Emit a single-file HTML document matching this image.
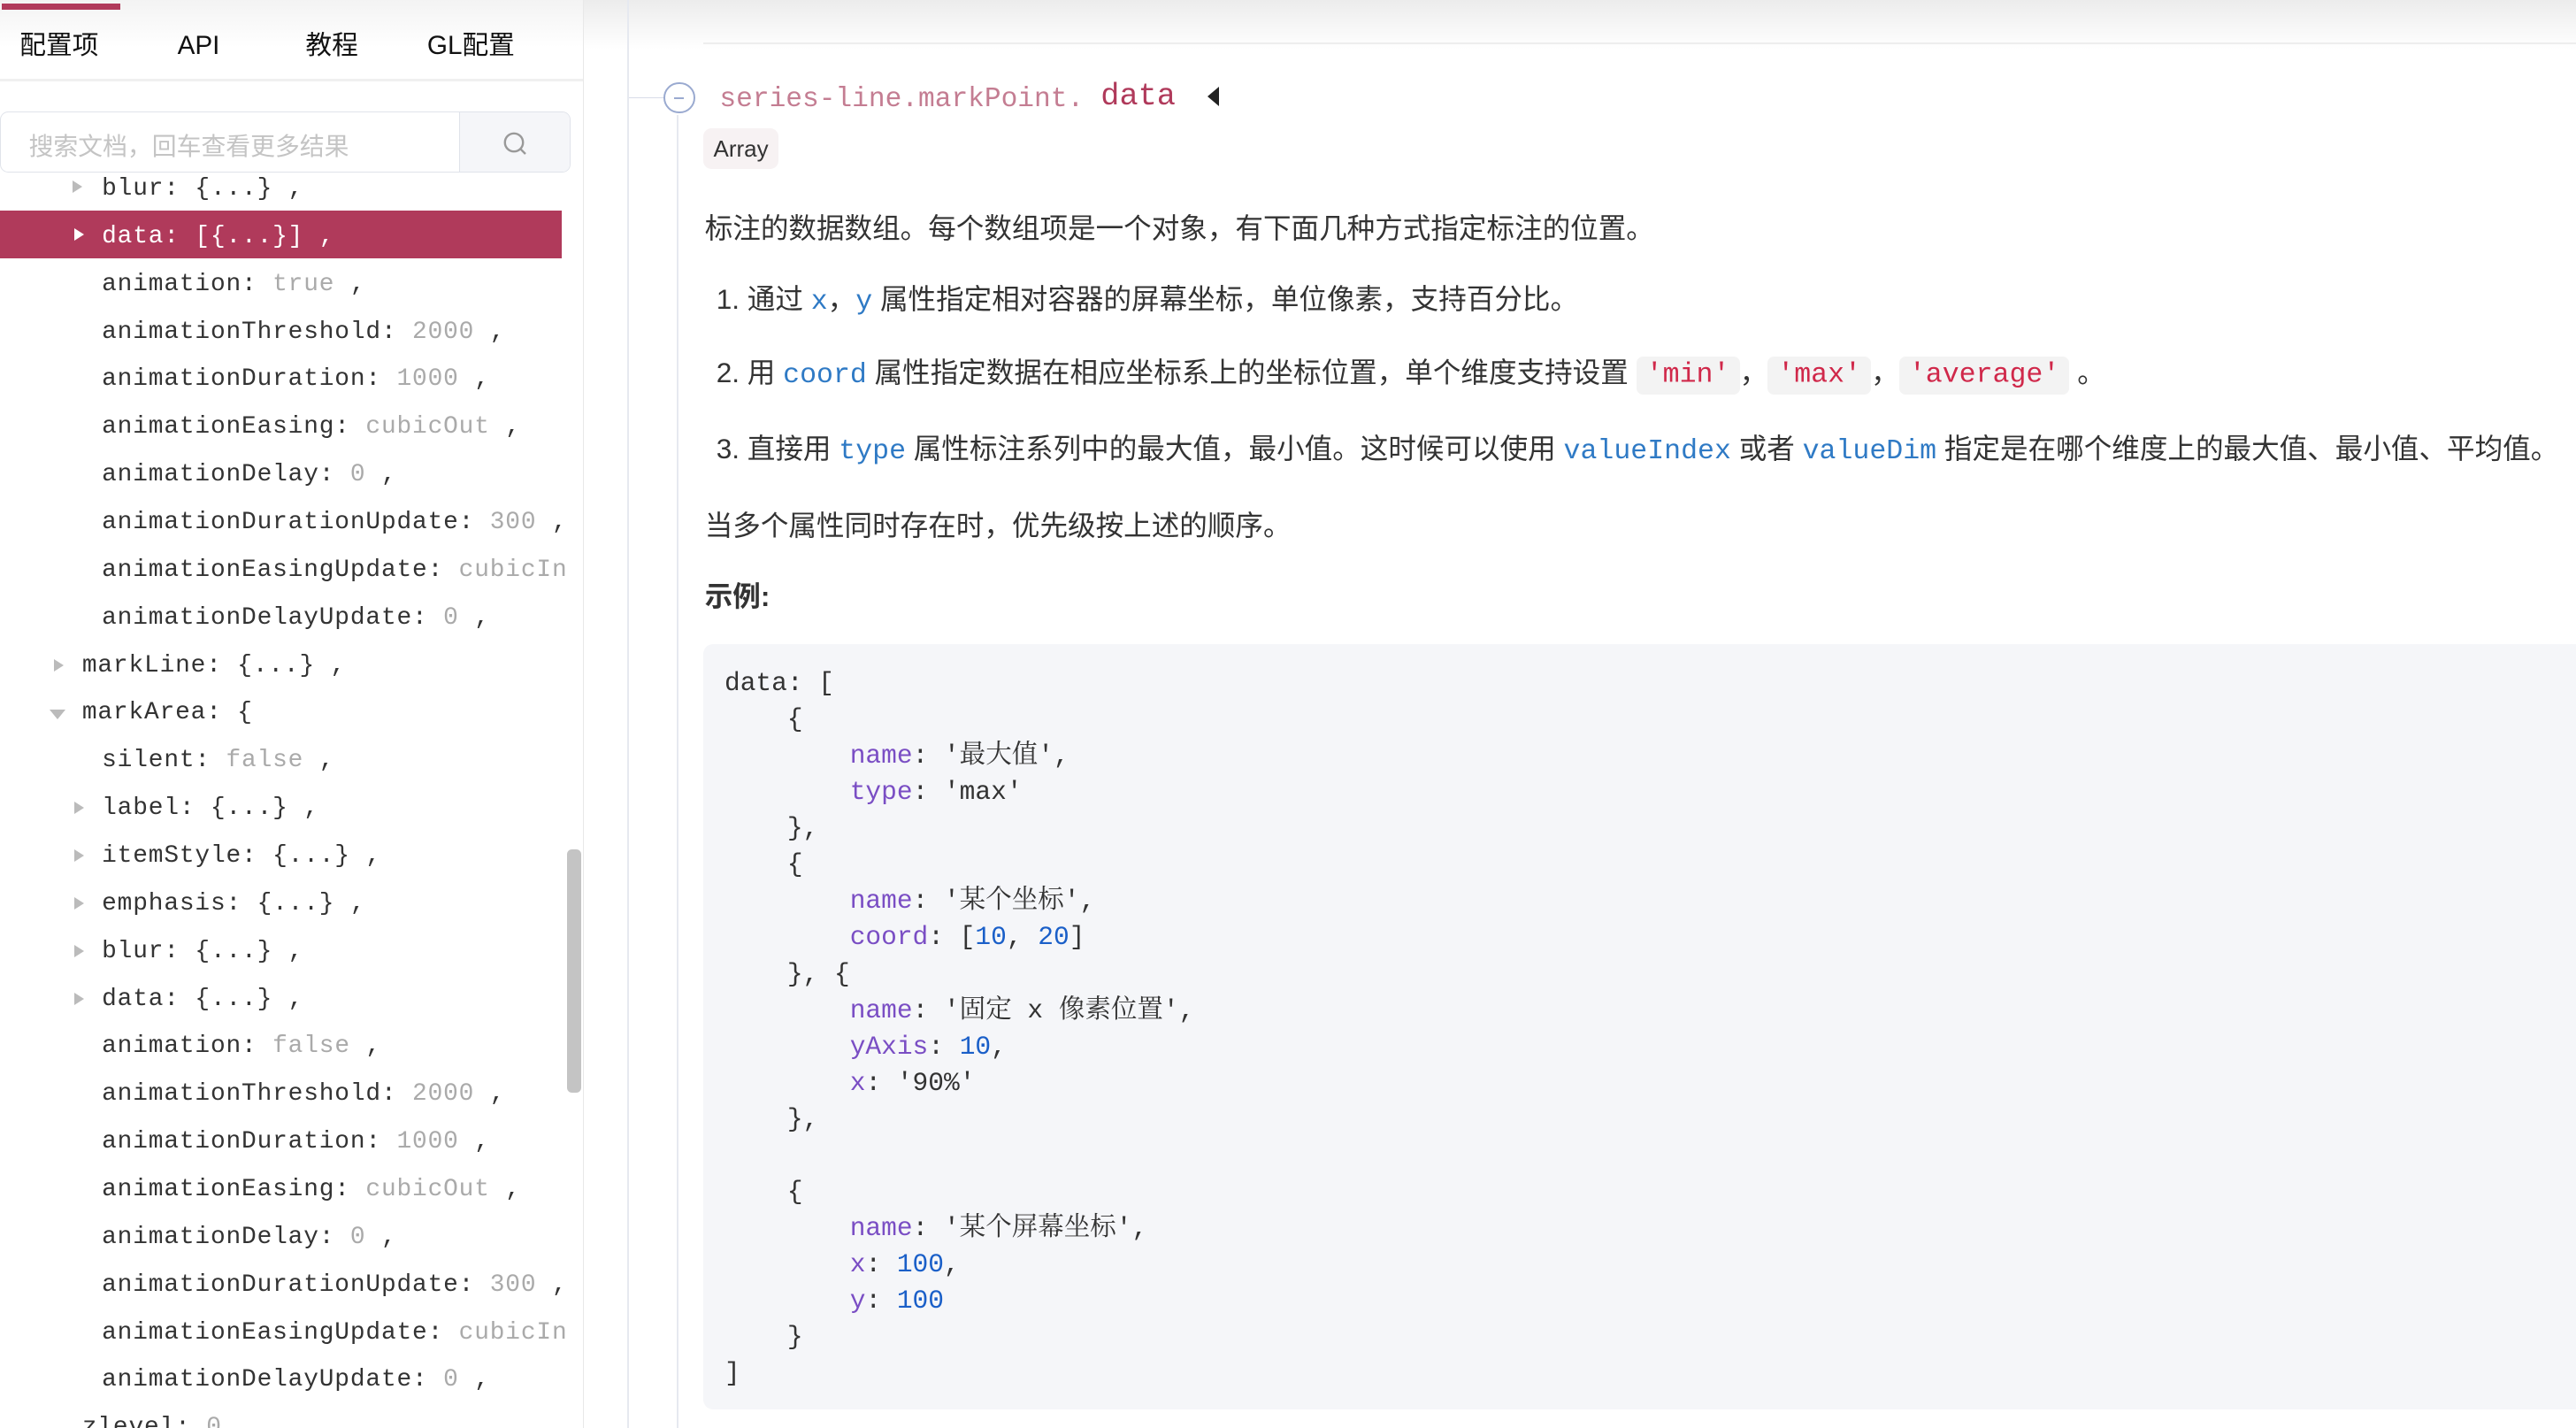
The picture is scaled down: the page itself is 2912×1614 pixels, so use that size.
<!DOCTYPE html>
<html><head><meta charset="utf-8"><style>
html,body{margin:0;padding:0;background:#fff;}
body{width:2912px;height:1613px;overflow:hidden;}
#w{zoom:1.857143;width:1568px;height:869px;position:relative;overflow:hidden;font-family:"Liberation Sans","Noto Sans CJK SC",sans-serif;color:#333;}
.abs{position:absolute;}
.mono{font-family:"Liberation Mono","Noto Sans CJK SC",monospace;}
#left{left:0;top:0;width:355px;height:869px;border-right:1px solid #e8e8e8;}
.tab{position:absolute;top:18px;font-size:16px;color:#111;line-height:20px;}
.tr{position:absolute;font-family:"Liberation Mono",monospace;font-size:15px;letter-spacing:0.45px;color:#333;white-space:pre;line-height:20px;}
.tr .v{color:#aaa;}
.ar{position:absolute;width:0;height:0;border-top:4px solid transparent;border-bottom:4px solid transparent;border-left:6px solid #bbb;}
.ad{position:absolute;width:0;height:0;border-left:5px solid transparent;border-right:5px solid transparent;border-top:6px solid #bbb;}
p.t{position:absolute;margin:0;font-size:17px;color:#333;white-space:nowrap;line-height:22px;}
.c{font-family:"Liberation Mono",monospace;color:#2f7ac5;font-size:17px;}
.q{font-family:"Liberation Mono",monospace;color:#d0284a;background:#f3f3f3;border-radius:4px;padding:2px 6px;font-size:17px;}
pre{margin:0;font-family:"Liberation Mono","Noto Serif CJK SC",monospace;font-size:15.9px;line-height:22.1px;color:#333;}
.k{color:#7a4ec4;}.n{color:#1a5fc8;}
</style></head><body><div id="w">
<div class="abs" style="left:0;top:0;width:1568px;height:30px;background:linear-gradient(#ececec,#fff);"></div>
<div id="left" class="abs">
 <div class="abs" style="left:0;top:0;width:355px;height:48px;background:linear-gradient(#f3f3f3,#fff 60%);border-bottom:2px solid #f0f0f0;"></div>
 <div class="abs" style="left:1px;top:2px;width:72px;height:4px;background:#b03a5b;"></div>
 <div class="tab" style="left:12px">配置项</div>
 <div class="tab" style="left:108px">API</div>
 <div class="tab" style="left:186px">教程</div>
 <div class="tab" style="left:260px">GL配置</div>
 <div class="abs" style="left:0;top:68px;width:346px;height:36px;border:1px solid #e0e3ea;border-radius:5px;overflow:hidden;">
  <div class="abs" style="left:17px;top:9px;font-size:15px;color:#c4c4c4;">搜索文档，回车查看更多结果</div>
  <div class="abs" style="left:279px;top:0;width:67px;height:36px;background:#f5f6f9;border-left:1px solid #e0e3ea;">
   <svg class="abs" style="left:26px;top:11px" width="16" height="16" viewBox="0 0 16 16"><circle cx="7" cy="7" r="5.5" fill="none" stroke="#999" stroke-width="1.3"/><path d="M11 11l3 3" stroke="#999" stroke-width="1.3"/></svg>
  </div>
 </div>
 <div class="abs" style="left:0;top:106px;width:355px;height:763px;overflow:hidden;">
  <div class="ar" style="left:44px;top:4px"></div><div class="tr" style="left:62px;top:-1px">blur: {...} ,</div>
  <div class="abs" style="left:0;top:22px;width:342px;height:29px;background:#b03a5b;"></div>
  <div class="ar" style="left:45px;top:33px;border-left-color:#fff"></div><div class="tr" style="left:62px;top:28px;color:#fff">data: [{...}] ,</div>
 </div>
 <div class="tr" style="left:62px;top:163px">animation: <span class="v">true</span> ,</div>
 <div class="tr" style="left:62px;top:192px">animationThreshold: <span class="v">2000</span> ,</div>
 <div class="tr" style="left:62px;top:221px">animationDuration: <span class="v">1000</span> ,</div>
 <div class="tr" style="left:62px;top:250px">animationEasing: <span class="v">cubicOut</span> ,</div>
 <div class="tr" style="left:62px;top:279px">animationDelay: <span class="v">0</span> ,</div>
 <div class="tr" style="left:62px;top:308px">animationDurationUpdate: <span class="v">300</span> ,</div>
 <div class="tr" style="left:62px;top:337px;width:282px;overflow:hidden">animationEasingUpdate: <span class="v">cubicIn</span></div>
 <div class="tr" style="left:62px;top:366px">animationDelayUpdate: <span class="v">0</span> ,</div>
 <div class="ar" style="left:33px;top:401px"></div><div class="tr" style="left:50px;top:395px">markLine: {...} ,</div>
 <div class="ad" style="left:30px;top:432px"></div><div class="tr" style="left:50px;top:424px">markArea: {</div>
 <div class="tr" style="left:62px;top:453px">silent: <span class="v">false</span> ,</div>
 <div class="ar" style="left:45px;top:488px"></div><div class="tr" style="left:62px;top:482px">label: {...} ,</div>
 <div class="ar" style="left:45px;top:517px"></div><div class="tr" style="left:62px;top:511px">itemStyle: {...} ,</div>
 <div class="ar" style="left:45px;top:546px"></div><div class="tr" style="left:62px;top:540px">emphasis: {...} ,</div>
 <div class="ar" style="left:45px;top:575px"></div><div class="tr" style="left:62px;top:569px">blur: {...} ,</div>
 <div class="ar" style="left:45px;top:604px"></div><div class="tr" style="left:62px;top:598px">data: {...} ,</div>
 <div class="tr" style="left:62px;top:627px">animation: <span class="v">false</span> ,</div>
 <div class="tr" style="left:62px;top:656px">animationThreshold: <span class="v">2000</span> ,</div>
 <div class="tr" style="left:62px;top:685px">animationDuration: <span class="v">1000</span> ,</div>
 <div class="tr" style="left:62px;top:714px">animationEasing: <span class="v">cubicOut</span> ,</div>
 <div class="tr" style="left:62px;top:743px">animationDelay: <span class="v">0</span> ,</div>
 <div class="tr" style="left:62px;top:772px">animationDurationUpdate: <span class="v">300</span> ,</div>
 <div class="tr" style="left:62px;top:801px;width:282px;overflow:hidden">animationEasingUpdate: <span class="v">cubicIn</span></div>
 <div class="tr" style="left:62px;top:830px">animationDelayUpdate: <span class="v">0</span> ,</div>
 <div class="tr" style="left:50px;top:859px">zlevel: <span class="v">0</span></div>
 <div class="abs" style="left:345px;top:517px;width:9px;height:148px;background:#c4c4c4;border-radius:3px;"></div>
</div>
<div class="abs" style="left:382px;top:0;width:1px;height:869px;background:#e6e9f0;"></div>
<div class="abs" style="left:412px;top:70px;width:1px;height:799px;background:#e6e9f0;"></div>
<div class="abs" style="left:428px;top:26px;width:1140px;height:1px;background:#eee;"></div>
<div class="abs" style="left:383px;top:59px;width:22px;height:1px;background:#d8dce8;"></div>
<div class="abs" style="left:404px;top:50px;width:19px;height:19px;border:1.3px solid #9aaad0;border-radius:50%;box-sizing:border-box;"><div class="abs" style="left:5px;top:8px;width:6px;height:1.3px;background:#9aaad0"></div></div>
<div class="abs mono" style="left:438px;top:50px;font-size:16.8px;color:#c47d92;white-space:nowrap;line-height:22px;">series-line.markPoint.</div>
<div class="abs mono" style="left:670px;top:48px;font-size:19px;color:#b03a5b;white-space:nowrap;line-height:22px;">data</div>
<div class="abs" style="left:735px;top:53px;width:0;height:0;border-top:6px solid transparent;border-bottom:6px solid transparent;border-right:7px solid #222;"></div>
<div class="abs" style="left:428px;top:78px;width:46px;height:25px;background:#f7f2f3;border-radius:5px;font-size:14px;line-height:25px;text-align:center;color:#333;">Array</div>
<p class="t" style="left:429px;top:128px">标注的数据数组。每个数组项是一个对象，有下面几种方式指定标注的位置。</p>
<p class="t" style="left:436px;top:171px">1. 通过 <span class="c">x</span>，<span class="c">y</span> 属性指定相对容器的屏幕坐标，单位像素，支持百分比。</p>
<p class="t" style="left:436px;top:216px">2. 用 <span class="c">coord</span> 属性指定数据在相应坐标系上的坐标位置，单个维度支持设置 <span class="q">'min'</span>，<span class="q">'max'</span>，<span class="q">'average'</span> 。</p>
<p class="t" style="left:436px;top:262px">3. 直接用 <span class="c">type</span> 属性标注系列中的最大值，最小值。这时候可以使用 <span class="c">valueIndex</span> 或者 <span class="c">valueDim</span> 指定是在哪个维度上的最大值、最小值、平均值。</p>
<p class="t" style="left:429px;top:309px">当多个属性同时存在时，优先级按上述的顺序。</p>
<p class="t" style="left:429px;top:352px;font-weight:bold">示例:</p>
<div class="abs" style="left:428px;top:392px;width:1160px;height:466px;background:#f5f6f9;border-radius:6px;">
<pre style="position:absolute;left:13px;top:13px">data: [
    {
        <span class="k">name</span>: '最大值',
        <span class="k">type</span>: 'max'
    },
    {
        <span class="k">name</span>: '某个坐标',
        <span class="k">coord</span>: [<span class="n">10</span>, <span class="n">20</span>]
    }, {
        <span class="k">name</span>: '固定 x 像素位置',
        <span class="k">yAxis</span>: <span class="n">10</span>,
        <span class="k">x</span>: '90%'
    },

    {
        <span class="k">name</span>: '某个屏幕坐标',
        <span class="k">x</span>: <span class="n">100</span>,
        <span class="k">y</span>: <span class="n">100</span>
    }
]</pre>
</div>
</div></body></html>
